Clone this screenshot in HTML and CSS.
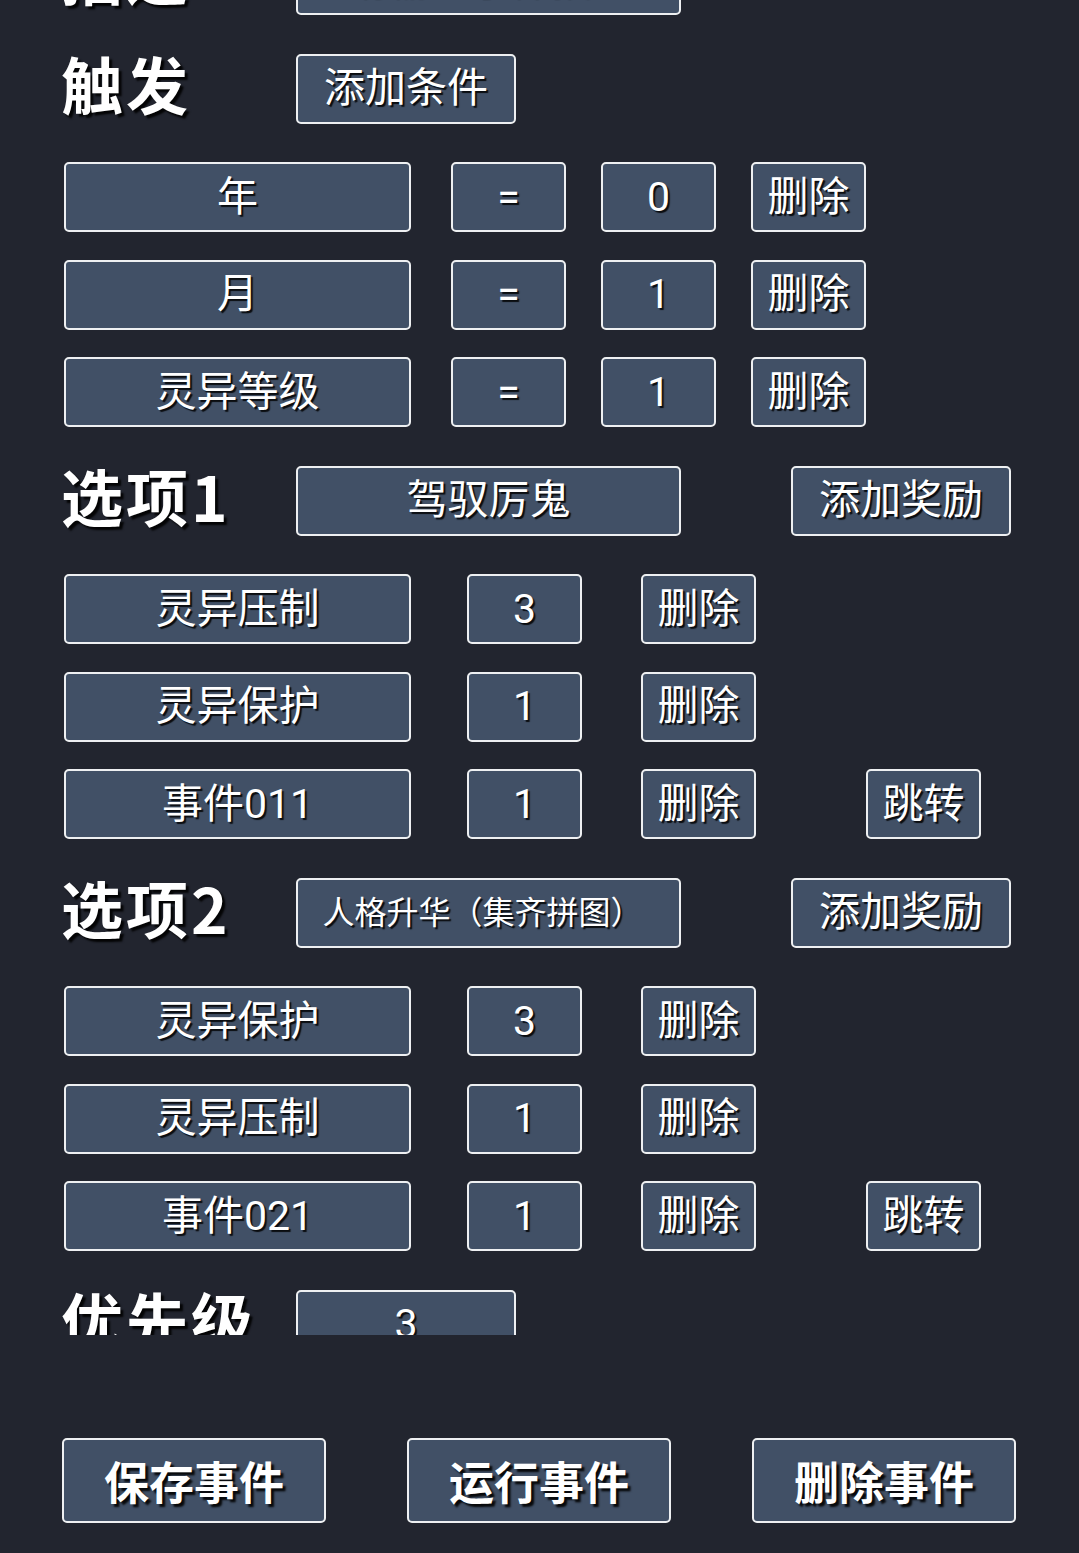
FILE: index.html
```html
<!DOCTYPE html>
<html lang="zh-CN">
<head>
<meta charset="utf-8">
<title>事件编辑</title>
<link rel="stylesheet" href="styles.css">
</head>
<body>
<div class="app">
  <div class="scroll">
    <div class="content">
      <div class="row head first">
        <div class="label">描述</div>
        <div class="btn wide">请输入事件描述</div>
      </div>

      <div class="row head">
        <div class="label">触发</div>
        <div class="btn mid">添加条件</div>
      </div>
      <div class="row cond">
        <div class="btn key">年</div>
        <div class="btn sm">=</div>
        <div class="btn sm">0</div>
        <div class="btn sm">删除</div>
      </div>
      <div class="row cond">
        <div class="btn key">月</div>
        <div class="btn sm">=</div>
        <div class="btn sm">1</div>
        <div class="btn sm">删除</div>
      </div>
      <div class="row cond">
        <div class="btn key">灵异等级</div>
        <div class="btn sm">=</div>
        <div class="btn sm">1</div>
        <div class="btn sm">删除</div>
      </div>

      <div class="row head">
        <div class="label">选项1</div>
        <div class="btn wide">驾驭厉鬼</div>
        <div class="btn mid">添加奖励</div>
      </div>
      <div class="row reward">
        <div class="btn key">灵异压制</div>
        <div class="btn sm">3</div>
        <div class="btn sm">删除</div>
      </div>
      <div class="row reward">
        <div class="btn key">灵异保护</div>
        <div class="btn sm">1</div>
        <div class="btn sm">删除</div>
      </div>
      <div class="row reward">
        <div class="btn key">事件011</div>
        <div class="btn sm">1</div>
        <div class="btn sm">删除</div>
        <div class="btn sm">跳转</div>
      </div>

      <div class="row head">
        <div class="label">选项2</div>
        <div class="btn wide small-text">人格升华（集齐拼图）</div>
        <div class="btn mid">添加奖励</div>
      </div>
      <div class="row reward">
        <div class="btn key">灵异保护</div>
        <div class="btn sm">3</div>
        <div class="btn sm">删除</div>
      </div>
      <div class="row reward">
        <div class="btn key">灵异压制</div>
        <div class="btn sm">1</div>
        <div class="btn sm">删除</div>
      </div>
      <div class="row reward">
        <div class="btn key">事件021</div>
        <div class="btn sm">1</div>
        <div class="btn sm">删除</div>
        <div class="btn sm">跳转</div>
      </div>

      <div class="row head">
        <div class="label">优先级</div>
        <div class="btn mid">3</div>
      </div>
    </div>
  </div>
  <div class="footer">
    <div class="btn big">保存事件</div>
    <div class="btn big">运行事件</div>
    <div class="btn big">删除事件</div>
  </div>
</div>
</body>
</html>
```

FILE: styles.css
```css
html, body {
  margin: 0;
  padding: 0;
  background: #22252f;
}

body {
  width: 1079px;
  height: 1553px;
  overflow: hidden;
  font-family: Roboto, "Noto Sans CJK SC", "Noto Sans", sans-serif;
  color: #ffffff;
}

.app {
  display: flex;
  flex-direction: column;
  height: 1553px;
}

.scroll {
  height: 1335px;
  overflow: hidden;
  flex: none;
}

.content {
  margin-top: -66px;
  padding-left: 64px;
  display: flex;
  flex-direction: column;
  gap: 27.5px;
}

.row {
  display: grid;
  height: 70px;
  align-items: center;
}

.head {
  grid-template-columns: 232px 495px auto;
  margin: 11px 0;
}

.head.first {
  margin-bottom: 0;
}

.cond {
  grid-template-columns: 387px 150px 150px 114px;
}

.reward {
  grid-template-columns: 403px 174px 225px 114px;
}

.label {
  align-self: start;
  margin-left: -3px;
  font-family: "Noto Sans CJK SC", sans-serif;
  font-size: 62px;
  font-weight: 700;
  letter-spacing: 3px;
  line-height: 58px;
  text-shadow: 3px 3px 2px rgba(0, 0, 0, 0.9);
  white-space: nowrap;
}

.btn {
  box-sizing: border-box;
  height: 70px;
  display: flex;
  align-items: center;
  justify-content: center;
  background: #415066;
  border: 2px solid #eef0f2;
  border-radius: 5px;
  font-size: 41px;
  line-height: 1;
  white-space: nowrap;
  text-shadow: 2px 2px 1px rgba(0, 0, 0, 0.85);
}

.wide {
  width: 385px;
}

.mid {
  width: 220px;
}

.key {
  width: 347px;
}

.sm {
  width: 115px;
}

.small-text {
  font-size: 32px;
  padding-right: 12px;
}

.footer {
  flex: 1;
  display: flex;
  gap: 81px;
  padding: 103px 0 0 62px;
}

.big {
  width: 264px;
  height: 85px;
  font-family: "Noto Sans CJK SC", sans-serif;
  font-size: 45px;
  font-weight: 700;
  text-shadow: 3px 3px 2px rgba(0, 0, 0, 0.9);
}
```
